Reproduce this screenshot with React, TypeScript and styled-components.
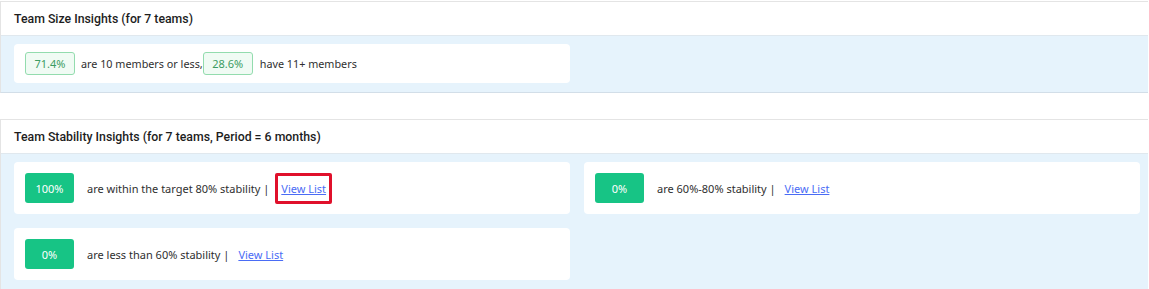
import * as React from 'react';
import styled, { createGlobalStyle } from "styled-components";

const GlobalStyle = createGlobalStyle`
    html, body {
        margin: 0;
        padding: 0;
        background: #ffffff;
        font-family: "Noto Sans", "Open Sans", sans-serif;
    }
`;

interface StabilityItem {
    value: string;
    label: string;
    highlighted?: boolean;
}

const stability: StabilityItem[] = [
    { value: "100%", label: "are within the target 80% stability |", highlighted: true },
    { value: "0%", label: "are 60%-80% stability |" },
    { value: "0%", label: "are less than 60% stability |" },
];

const App: React.FC = () => {
    return (
        <Page>
            <GlobalStyle />
            <Panel>
                <PanelHeader>Team Size Insights (for 7 teams)</PanelHeader>
                <PanelBody>
                    <Card $short>
                        <OutlineBadge>71.4%</OutlineBadge>
                        <InlineText>are 10 members or less,</InlineText>
                        <OutlineBadge>28.6%</OutlineBadge>
                        <InlineText $left={7}>have 11+ members</InlineText>
                    </Card>
                </PanelBody>
            </Panel>
            <Panel>
                <PanelHeader>Team Stability Insights (for 7 teams, Period = 6 months)</PanelHeader>
                <PanelBody>
                    {stability.map((item, i) => (
                        <Card key={i}>
                            <SolidBadge>{item.value}</SolidBadge>
                            <CardText>{item.label}</CardText>
                            <LinkWrap $highlighted={item.highlighted}>
                                <ViewLink href="#">View List</ViewLink>
                            </LinkWrap>
                        </Card>
                    ))}
                </PanelBody>
            </Panel>
        </Page>
    );
}

export default App;

const Page = styled.div`
    width: 1149px;
    padding-top: 1px;
    display: flex;
    flex-direction: column;
    gap: 26px;
`;

const Panel = styled.section`
    width: 1148px;
    border: 1px solid #e4e4e4;
    border-right: none;
    border-bottom-color: #d2dee8;
    box-sizing: border-box;
    background: #e6f3fc;
`;

const PanelHeader = styled.div`
    height: 33px;
    background: #ffffff;
    border-bottom: 1px solid #e0e8ee;
    padding-left: 13px;
    display: flex;
    align-items: center;
    font-family: Roboto, "Noto Sans", sans-serif;
    font-size: 12.3px;
    font-weight: 500;
    color: #1d1d1d;
`;

const PanelBody = styled.div`
    display: grid;
    grid-template-columns: 556px 556px;
    column-gap: 14px;
    row-gap: 14px;
    padding: 8px 9px 9px 13px;
`;

const Card = styled.div<{ $short?: boolean }>`
    height: ${p => p.$short ? 39 : 52}px;
    background: #ffffff;
    border-radius: 4px;
    display: flex;
    align-items: center;
    padding-left: 11px;
    font-size: 11px;
    color: #2f2f2f;
`;

const OutlineBadge = styled.span`
    width: 50px;
    height: 23px;
    box-sizing: border-box;
    border: 1px solid #93dcae;
    background: #f0fbf4;
    border-radius: 3px;
    color: #3c9c63;
    display: flex;
    align-items: center;
    justify-content: center;
    font-size: 11px;
`;

const InlineText = styled.span<{ $left?: number }>`
    margin-left: ${p => p.$left ?? 6}px;
    font-size: 10.8px;
`;

const SolidBadge = styled.span`
    width: 49px;
    height: 30px;
    background: #17c485;
    border-radius: 3px;
    color: #ffffff;
    display: flex;
    align-items: center;
    justify-content: center;
    font-size: 11px;
`;

const CardText = styled.span`
    margin-left: 13px;
`;

const LinkWrap = styled.span<{ $highlighted?: boolean }>`
    margin-left: ${p => p.$highlighted ? 6 : 9}px;
    padding: ${p => p.$highlighted ? "5px 3px" : "0"};
    border: ${p => p.$highlighted ? "3px solid #e0102b" : "none"};
    border-radius: 2px;
    display: flex;
    align-items: center;
`;

const ViewLink = styled.a`
    color: #4a6cf5;
    text-decoration: underline;
    font-size: 11px;
`;
